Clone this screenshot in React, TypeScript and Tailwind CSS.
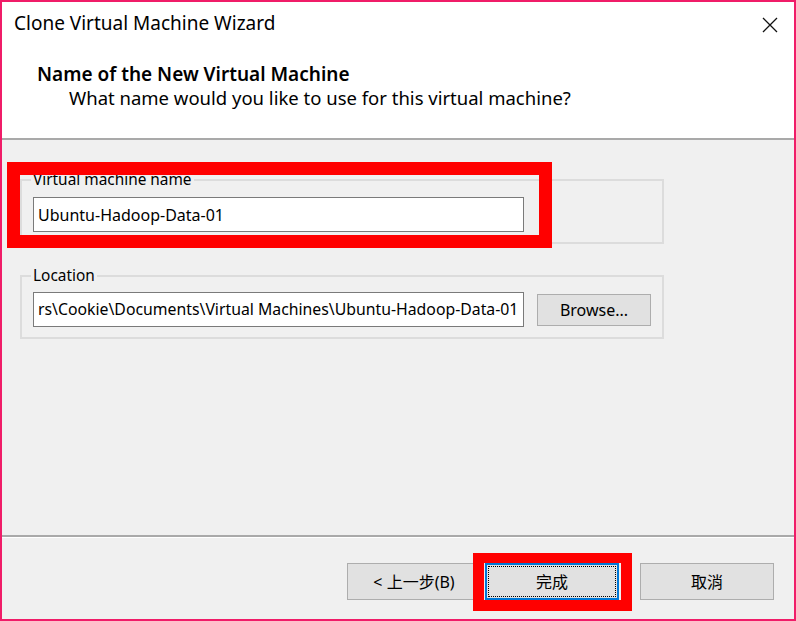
export default function App() {
  return (
    <div className="relative w-[796px] h-[621px] font-['Noto_Sans','Noto_Sans_CJK_TC',sans-serif] text-black">
      {/* dialog window */}
      <div className="w-full h-full border-2 border-[#f01c68] bg-[#f0f0f0] flex flex-col">
        {/* header */}
        <div className="h-[136px] bg-white flex flex-col">
          <div className="flex items-start justify-between pl-3 pr-4 pt-[8px]">
            <span className="text-[19px] leading-[26px]">Clone Virtual Machine Wizard</span>
            <svg width="16" height="16" viewBox="0 0 16 16" className="mt-[7px]">
              <path d="M1 1 L15 15 M15 1 L1 15" stroke="#111" strokeWidth="1.3" />
            </svg>
          </div>
          <div className="pl-[35px] pt-[25px] text-[19px] leading-[26px] font-semibold">
            Name of the New Virtual Machine
          </div>
          <div className="pl-[67px] text-[18.5px] leading-[22px]">
            What name would you like to use for this virtual machine?
          </div>
        </div>
        <div className="h-[2px] bg-[#a9a9a9]" />

        {/* body */}
        <div className="flex-1 flex flex-col text-[15.4px] pt-[30px] pl-[18px]">
          <fieldset className="w-[644px] border-2 border-[#dcdcdc] pb-[10px]">
            <legend className="ml-[9px] px-[2px] leading-[20px]">Virtual machine name</legend>
            <div className="mt-[7px] ml-[11px] w-[491px] h-[35px] bg-white border border-[#7a7a7a] flex items-center pl-[4px] text-[16px]">
              Ubuntu-Hadoop-Data-01
            </div>
          </fieldset>

          <fieldset className="mt-[22px] w-[644px] border-2 border-[#dcdcdc] pb-[10px]">
            <legend className="ml-[9px] px-[2px] leading-[20px]">Location</legend>
            <div className="mt-[6px] ml-[11px] flex items-center gap-[13px]">
              <div className="w-[491px] h-[35px] bg-white border border-[#7a7a7a] flex items-center pl-[4px] text-[15.8px] overflow-hidden whitespace-nowrap">
                rs\Cookie\Documents\Virtual Machines\Ubuntu-Hadoop-Data-01
              </div>
              <button className="w-[114px] h-[32px] bg-[#e1e1e1] border border-[#adadad] text-[16px] leading-none">
                Browse...
              </button>
            </div>
          </fieldset>
        </div>

        {/* footer */}
        <div className="h-[84px] border-t-2 border-[#a9a9a9] flex flex-col">
          <div className="h-[1px] bg-white" />
          <div className="flex justify-end items-start pt-[25px] pr-[20px] text-[16px]">
            <button className="w-[134px] h-[37px] bg-[#e1e1e1] border border-[#adadad] flex items-center justify-center">
              &lt; 上一步(B)
            </button>
            <button className="ml-[4px] w-[134px] h-[37px] bg-[#e1e1e1] border-2 border-[#0078d7] p-[1px]">
              <span className="w-full h-full border border-dotted border-black flex items-center justify-center">
                完成
              </span>
            </button>
            <button className="ml-[21px] w-[134px] h-[37px] bg-[#e1e1e1] border border-[#adadad] flex items-center justify-center">
              取消
            </button>
          </div>
        </div>
      </div>

      {/* red annotation boxes */}
      <div className="absolute left-[7px] top-[162px] w-[545px] h-[86px] border-[13px] border-[#ff0000]" />
      <div className="absolute left-[473px] top-[553px] w-[159px] h-[58px] border-[11px] border-t-[10px] border-[#ff0000]" />
    </div>
  );
}
